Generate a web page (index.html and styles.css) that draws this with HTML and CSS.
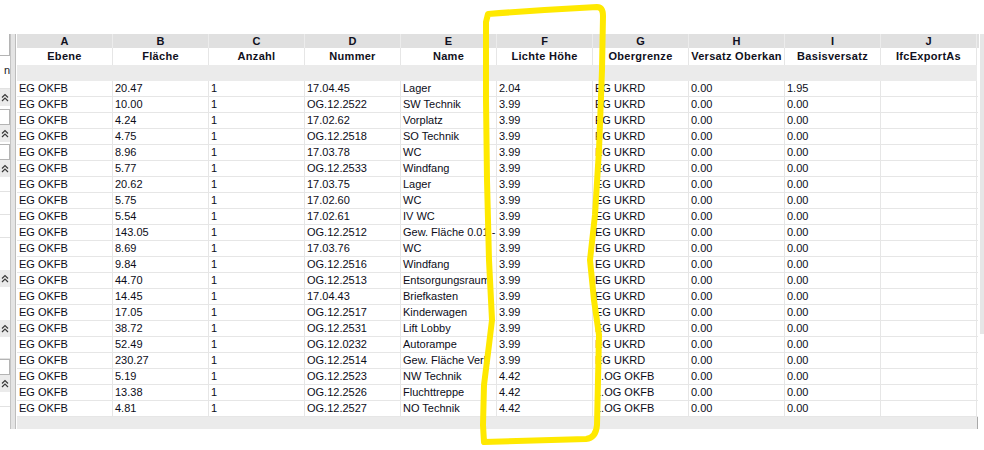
FILE: index.html
```html
<!DOCTYPE html>
<html>
<head>
<meta charset="utf-8">
<link rel="stylesheet" href="styles.css">
</head>
<body>
<div class="top"></div>
<div class="frame">
  <div class="side">
    <div class="sbox first"></div>
    <div class="sgap h8"></div>
    <div class="slabel">n</div>
    <div class="sgap h11 line"></div>
    <div class="schev"><svg width="8" height="9" viewBox="0 0 8 9"><path d="M1 4.5 L4 1.5 L7 4.5 M1 8 L4 5 L7 8" stroke="#3a3a3a" stroke-width="1.2" fill="none"/></svg></div>
    <div class="sgap h3"></div>
    <div class="sbox"></div>
    <div class="schev"><svg width="8" height="9" viewBox="0 0 8 9"><path d="M1 4.5 L4 1.5 L7 4.5 M1 8 L4 5 L7 8" stroke="#3a3a3a" stroke-width="1.2" fill="none"/></svg></div>
    <div class="sgap h2"></div>
    <div class="sbox"></div>
    <div class="schev"><svg width="8" height="9" viewBox="0 0 8 9"><path d="M1 4.5 L4 1.5 L7 4.5 M1 8 L4 5 L7 8" stroke="#3a3a3a" stroke-width="1.2" fill="none"/></svg></div>
    <div class="sgap h14 line"></div>
    <div class="sgap h23 line"></div>
    <div class="sgap h23 line"></div>
    <div class="sgap h32"></div>
    <div class="schev"><svg width="8" height="9" viewBox="0 0 8 9"><path d="M1 4.5 L4 1.5 L7 4.5 M1 8 L4 5 L7 8" stroke="#3a3a3a" stroke-width="1.2" fill="none"/></svg></div>
    <div class="sgap h33"></div>
    <div class="schev"><svg width="8" height="9" viewBox="0 0 8 9"><path d="M1 4.5 L4 1.5 L7 4.5 M1 8 L4 5 L7 8" stroke="#3a3a3a" stroke-width="1.2" fill="none"/></svg></div>
    <div class="sgap h21 line"></div>
    <div class="sbox"></div>
    <div class="schev"><svg width="8" height="9" viewBox="0 0 8 9"><path d="M1 4.5 L4 1.5 L7 4.5 M1 8 L4 5 L7 8" stroke="#3a3a3a" stroke-width="1.2" fill="none"/></svg></div>
    <div class="sgap h14 line"></div>
  </div>
  <div class="divider"></div>
  <div class="grid">
    <div class="row letters">
      <div class="c">A</div><div class="c">B</div><div class="c">C</div><div class="c">D</div><div class="c">E</div><div class="c">F</div><div class="c">G</div><div class="c">H</div><div class="c">I</div><div class="c">J</div><div class="fill"></div>
    </div>
    <div class="row fields">
      <div class="c">Ebene</div><div class="c">Fläche</div><div class="c">Anzahl</div><div class="c">Nummer</div><div class="c">Name</div><div class="c">Lichte Höhe</div><div class="c">Obergrenze</div><div class="c">Versatz Oberkan</div><div class="c">Basisversatz</div><div class="c">IfcExportAs</div><div class="fill"></div>
    </div>
    <div class="row blank"></div>
    <div class="row data"><div class="c">EG OKFB</div><div class="c">20.47</div><div class="c">1</div><div class="c">17.04.45</div><div class="c">Lager</div><div class="c">2.04</div><div class="c">EG UKRD</div><div class="c">0.00</div><div class="c">1.95</div><div class="c"></div></div>
    <div class="row data"><div class="c">EG OKFB</div><div class="c">10.00</div><div class="c">1</div><div class="c">OG.12.2522</div><div class="c">SW Technik</div><div class="c">3.99</div><div class="c">EG UKRD</div><div class="c">0.00</div><div class="c">0.00</div><div class="c"></div></div>
    <div class="row data"><div class="c">EG OKFB</div><div class="c">4.24</div><div class="c">1</div><div class="c">17.02.62</div><div class="c">Vorplatz</div><div class="c">3.99</div><div class="c">EG UKRD</div><div class="c">0.00</div><div class="c">0.00</div><div class="c"></div></div>
    <div class="row data"><div class="c">EG OKFB</div><div class="c">4.75</div><div class="c">1</div><div class="c">OG.12.2518</div><div class="c">SO Technik</div><div class="c">3.99</div><div class="c">EG UKRD</div><div class="c">0.00</div><div class="c">0.00</div><div class="c"></div></div>
    <div class="row data"><div class="c">EG OKFB</div><div class="c">8.96</div><div class="c">1</div><div class="c">17.03.78</div><div class="c">WC</div><div class="c">3.99</div><div class="c">EG UKRD</div><div class="c">0.00</div><div class="c">0.00</div><div class="c"></div></div>
    <div class="row data"><div class="c">EG OKFB</div><div class="c">5.77</div><div class="c">1</div><div class="c">OG.12.2533</div><div class="c">Windfang</div><div class="c">3.99</div><div class="c">EG UKRD</div><div class="c">0.00</div><div class="c">0.00</div><div class="c"></div></div>
    <div class="row data"><div class="c">EG OKFB</div><div class="c">20.62</div><div class="c">1</div><div class="c">17.03.75</div><div class="c">Lager</div><div class="c">3.99</div><div class="c">EG UKRD</div><div class="c">0.00</div><div class="c">0.00</div><div class="c"></div></div>
    <div class="row data"><div class="c">EG OKFB</div><div class="c">5.75</div><div class="c">1</div><div class="c">17.02.60</div><div class="c">WC</div><div class="c">3.99</div><div class="c">EG UKRD</div><div class="c">0.00</div><div class="c">0.00</div><div class="c"></div></div>
    <div class="row data"><div class="c">EG OKFB</div><div class="c">5.54</div><div class="c">1</div><div class="c">17.02.61</div><div class="c">IV WC</div><div class="c">3.99</div><div class="c">EG UKRD</div><div class="c">0.00</div><div class="c">0.00</div><div class="c"></div></div>
    <div class="row data"><div class="c">EG OKFB</div><div class="c">143.05</div><div class="c">1</div><div class="c">OG.12.2512</div><div class="c">Gew. Fläche 0.01 -</div><div class="c">3.99</div><div class="c">EG UKRD</div><div class="c">0.00</div><div class="c">0.00</div><div class="c"></div></div>
    <div class="row data"><div class="c">EG OKFB</div><div class="c">8.69</div><div class="c">1</div><div class="c">17.03.76</div><div class="c">WC</div><div class="c">3.99</div><div class="c">EG UKRD</div><div class="c">0.00</div><div class="c">0.00</div><div class="c"></div></div>
    <div class="row data"><div class="c">EG OKFB</div><div class="c">9.84</div><div class="c">1</div><div class="c">OG.12.2516</div><div class="c">Windfang</div><div class="c">3.99</div><div class="c">EG UKRD</div><div class="c">0.00</div><div class="c">0.00</div><div class="c"></div></div>
    <div class="row data"><div class="c">EG OKFB</div><div class="c">44.70</div><div class="c">1</div><div class="c">OG.12.2513</div><div class="c">Entsorgungsraum</div><div class="c">3.99</div><div class="c">EG UKRD</div><div class="c">0.00</div><div class="c">0.00</div><div class="c"></div></div>
    <div class="row data"><div class="c">EG OKFB</div><div class="c">14.45</div><div class="c">1</div><div class="c">17.04.43</div><div class="c">Briefkasten</div><div class="c">3.99</div><div class="c">EG UKRD</div><div class="c">0.00</div><div class="c">0.00</div><div class="c"></div></div>
    <div class="row data"><div class="c">EG OKFB</div><div class="c">17.05</div><div class="c">1</div><div class="c">OG.12.2517</div><div class="c">Kinderwagen</div><div class="c">3.99</div><div class="c">EG UKRD</div><div class="c">0.00</div><div class="c">0.00</div><div class="c"></div></div>
    <div class="row data"><div class="c">EG OKFB</div><div class="c">38.72</div><div class="c">1</div><div class="c">OG.12.2531</div><div class="c">Lift Lobby</div><div class="c">3.99</div><div class="c">EG UKRD</div><div class="c">0.00</div><div class="c">0.00</div><div class="c"></div></div>
    <div class="row data"><div class="c">EG OKFB</div><div class="c">52.49</div><div class="c">1</div><div class="c">OG.12.0232</div><div class="c">Autorampe</div><div class="c">3.99</div><div class="c">EG UKRD</div><div class="c">0.00</div><div class="c">0.00</div><div class="c"></div></div>
    <div class="row data"><div class="c">EG OKFB</div><div class="c">230.27</div><div class="c">1</div><div class="c">OG.12.2514</div><div class="c">Gew. Fläche Verk</div><div class="c">3.99</div><div class="c">EG UKRD</div><div class="c">0.00</div><div class="c">0.00</div><div class="c"></div></div>
    <div class="row data"><div class="c">EG OKFB</div><div class="c">5.19</div><div class="c">1</div><div class="c">OG.12.2523</div><div class="c">NW Technik</div><div class="c">4.42</div><div class="c">1.OG OKFB</div><div class="c">0.00</div><div class="c">0.00</div><div class="c"></div></div>
    <div class="row data"><div class="c">EG OKFB</div><div class="c">13.38</div><div class="c">1</div><div class="c">OG.12.2526</div><div class="c">Fluchttreppe</div><div class="c">4.42</div><div class="c">1.OG OKFB</div><div class="c">0.00</div><div class="c">0.00</div><div class="c"></div></div>
    <div class="row data"><div class="c">EG OKFB</div><div class="c">4.81</div><div class="c">1</div><div class="c">OG.12.2527</div><div class="c">NO Technik</div><div class="c">4.42</div><div class="c">1.OG OKFB</div><div class="c">0.00</div><div class="c">0.00</div><div class="c"></div></div>
    <div class="tail"></div>
  </div>
  <div class="rstrip"></div>
</div>
<svg class="marker" width="984" height="450" viewBox="0 0 984 450">
  <path d="M486 22 L488 14 Q540 10 597 7 Q603 7 603 16 L602 70 L599 150 L595 215 L590 260 L594 300 L599 335 L598 380 L597 425 Q596 438 586 439 L484 442 L483 425 L484 385 L489 345 L492 320 L489 260 L487 180 L486 100 L486 22" fill="none" stroke="#ffe900" stroke-width="6" stroke-linecap="round" stroke-linejoin="round"/>
</svg>
</body>
</html>
```

FILE: styles.css
```css
html, body {
  margin: 0;
  padding: 0;
  background: #ffffff;
}
body {
  font-family: "Liberation Sans", Arial, sans-serif;
  font-size: 11px;
  color: #0c0c18;
  width: 984px;
  height: 450px;
  overflow: hidden;
  position: relative;
}
.top {
  height: 34px;
}
.frame {
  display: flex;
  height: 395px;
}
.side {
  width: 10px;
  flex: none;
  display: flex;
  flex-direction: column;
  overflow: hidden;
}
.sbox {
  height: 16px;
  flex: none;
  box-sizing: border-box;
  border: 1px solid #b4b4b4;
  border-left: none;
  background: #fff;
}
.sbox.first {
  height: 22px;
  border-top: none;
}
.sgap { flex: none; }
.sgap.line { border-bottom: 1px solid #e2e2e2; }
.h2 { height: 2px; }
.h3 { height: 3px; }
.h8 { height: 8px; }
.h11 { height: 11px; }
.h14 { height: 14px; }
.h21 { height: 21px; }
.h23 { height: 22px; }
.h32 { height: 32px; }
.h33 { height: 33px; }
.slabel {
  height: 13px;
  flex: none;
  line-height: 13px;
  text-align: right;
  white-space: nowrap;
  overflow: hidden;
  color: #222;
}
.schev {
  height: 17px;
  flex: none;
  background: #ebebeb;
  display: flex;
  align-items: center;
  padding-left: 1px;
}
.schev svg { display: block; }
.divider {
  width: 7px;
  flex: none;
  box-sizing: border-box;
  border-left: 1px solid #c4c4c4;
  border-right: 1px solid #ffffff;
  background: linear-gradient(to right, #e4e4e4 0, #e4e4e4 4px, #bdbdbd 4px, #bdbdbd 5px);
}
.grid {
  width: 962px;
  flex: none;
  display: flex;
  flex-direction: column;
}
.row {
  display: flex;
  flex: none;
}
.c {
  width: 96px;
  flex: none;
  box-sizing: border-box;
  white-space: nowrap;
  overflow: hidden;
}
.fill {
  flex: 1;
}
.letters {
  height: 14px;
  line-height: 14px;
  background: #e0e0e0;
  font-weight: bold;
  color: #101020;
}
.letters .c {
  text-align: center;
  border-right: 1px solid #ececec;
}
.fields {
  height: 17px;
  line-height: 17px;
  background: #ffffff;
  font-weight: bold;
  letter-spacing: 0.3px;
  color: #101020;
}
.fields .c {
  text-align: center;
  border-right: 1px solid #e6e6e6;
}
.blank {
  height: 16px;
  background: #ebebeb;
  width: 960px;
}
.data {
  height: 16px;
  line-height: 15px;
  box-sizing: border-box;
  border-bottom: 1px solid #e6e6e6;
  width: 961px;
}
.data .c {
  padding-left: 2px;
  border-right: 1px solid #e6e6e6;
}
.tail {
  height: 12px;
  width: 960px;
  background: #ebebeb;
  border-right: 1px solid #a8a8a8;
}
.rstrip {
  width: 4px;
  flex: none;
  margin-left: 1px;
  height: 300px;
  background: #e6e6e6;
}
.marker {
  position: absolute;
  left: 0;
  top: 0;
  pointer-events: none;
}
```
